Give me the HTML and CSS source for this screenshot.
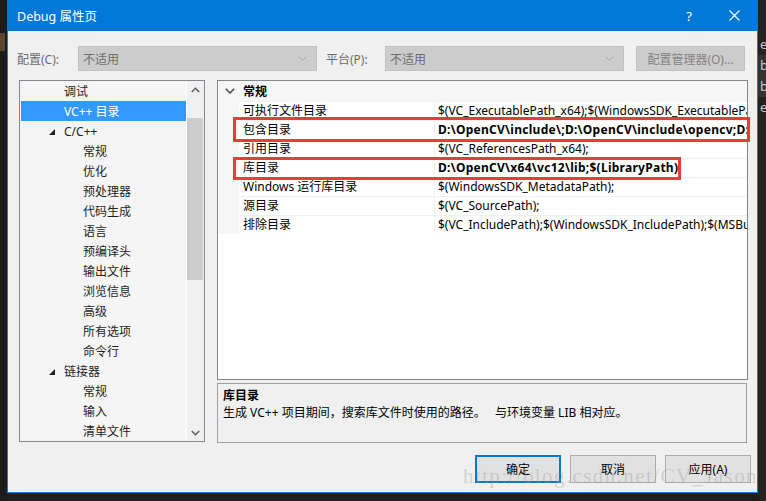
FILE: index.html
```html
<!DOCTYPE html>
<html lang="zh-CN">
<head>
<meta charset="utf-8">
<title>Debug 属性页</title>
<link rel="stylesheet" href="styles.css">
</head>
<body>
<div class="screen">
  <div class="edge edge-left"><span class="smudge"></span></div>
  <div class="dialog">
    <header class="titlebar">
      <span class="title">Debug 属性页</span>
      <span class="help">?</span>
      <svg class="close" width="11" height="11" viewBox="0 0 11 11"><path d="M0.5 0.5L10.5 10.5M10.5 0.5L0.5 10.5" stroke="#fff" stroke-width="1.1" fill="none"/></svg>
    </header>

    <div class="toolbar">
      <span class="lbl lbl-config">配置(C):</span>
      <div class="combo combo-config"><span>不适用</span><svg width="9" height="5" viewBox="0 0 9 5"><path d="M0.5 0.5L4.5 4.5L8.5 0.5" stroke="#a6a6a6" fill="none"/></svg></div>
      <span class="lbl lbl-platform">平台(P):</span>
      <div class="combo combo-platform"><span>不适用</span><svg width="9" height="5" viewBox="0 0 9 5"><path d="M0.5 0.5L4.5 4.5L8.5 0.5" stroke="#a6a6a6" fill="none"/></svg></div>
      <div class="btn-disabled">配置管理器(O)...</div>
    </div>

    <div class="main">
      <div class="tree">
        <ul class="tree-list">
          <li class="ti l1">调试</li>
          <li class="ti l1 sel">VC++ 目录</li>
          <li class="ti exp"><svg class="tri" width="6" height="6" viewBox="0 0 6 6"><polygon points="6,0 6,6 0,6" fill="#1e1e1e"/></svg>C/C++</li>
          <li class="ti l2">常规</li>
          <li class="ti l2">优化</li>
          <li class="ti l2">预处理器</li>
          <li class="ti l2">代码生成</li>
          <li class="ti l2">语言</li>
          <li class="ti l2">预编译头</li>
          <li class="ti l2">输出文件</li>
          <li class="ti l2">浏览信息</li>
          <li class="ti l2">高级</li>
          <li class="ti l2">所有选项</li>
          <li class="ti l2">命令行</li>
          <li class="ti exp"><svg class="tri" width="6" height="6" viewBox="0 0 6 6"><polygon points="6,0 6,6 0,6" fill="#1e1e1e"/></svg>链接器</li>
          <li class="ti l2">常规</li>
          <li class="ti l2">输入</li>
          <li class="ti l2">清单文件</li>
        </ul>
        <div class="vscroll">
          <div class="sb-btn"><svg width="9" height="6" viewBox="0 0 9 6"><path d="M0.8 5L4.5 1.3L8.2 5" stroke="#606060" stroke-width="1.6" fill="none"/></svg></div>
          <div class="track"><div class="thumb"></div></div>
          <div class="sb-btn"><svg width="9" height="6" viewBox="0 0 9 6"><path d="M0.8 1L4.5 4.7L8.2 1" stroke="#606060" stroke-width="1.6" fill="none"/></svg></div>
        </div>
      </div>

      <div class="rightcol">
        <div class="grid">
          <div class="g-head">
            <span class="g-gutter g-chev"><svg width="10" height="6" viewBox="0 0 10 6"><path d="M0.8 0.8L5 5L9.2 0.8" stroke="#404040" stroke-width="1.4" fill="none"/></svg></span>
            <span class="g-cat">常规</span>
          </div>
          <div class="g-row"><span class="g-gutter"></span><span class="g-name">可执行文件目录</span><span class="g-val">$(VC_ExecutablePath_x64);$(WindowsSDK_ExecutablePath);$(VS_ExecutablePath);$(MSBuild_ExecutablePath)</span></div>
          <div class="g-row"><span class="g-gutter"></span><span class="g-name">包含目录</span><span class="g-val bold">D:\OpenCV\include\;D:\OpenCV\include\opencv;D:\OpenCV\include\opencv2;$(IncludePath)</span></div>
          <div class="g-row"><span class="g-gutter"></span><span class="g-name">引用目录</span><span class="g-val">$(VC_ReferencesPath_x64);</span></div>
          <div class="g-row"><span class="g-gutter"></span><span class="g-name">库目录</span><span class="g-val bold">D:\OpenCV\x64\vc12\lib;$(LibraryPath)</span></div>
          <div class="g-row"><span class="g-gutter"></span><span class="g-name">Windows 运行库目录</span><span class="g-val">$(WindowsSDK_MetadataPath);</span></div>
          <div class="g-row"><span class="g-gutter"></span><span class="g-name">源目录</span><span class="g-val">$(VC_SourcePath);</span></div>
          <div class="g-row"><span class="g-gutter"></span><span class="g-name">排除目录</span><span class="g-val">$(VC_IncludePath);$(WindowsSDK_IncludePath);$(MSBuild_ExecutablePath);$(VC_LibraryPath_x64)</span></div>
          <div class="hl hl-include"></div>
          <div class="hl hl-lib"></div>
        </div>
        <div class="desc">
          <div class="desc-title">库目录</div>
          <div class="desc-text">生成 VC++ 项目期间，搜索库文件时使用的路径。&nbsp;&nbsp; 与环境变量 LIB 相对应。</div>
        </div>
      </div>
    </div>

    <div class="buttons">
      <div class="btn btn-default">确定</div>
      <div class="btn">取消</div>
      <div class="btn">应用(A)</div>
    </div>

    <div class="watermark">http://blog.csdn.net/CV_Jason</div>
  </div>
  <div class="edge edge-right">
    <span class="frag">et</span>
    <span class="frag dark">b</span>
    <span class="frag dark">b</span>
    <span class="frag">e</span>
  </div>
</div>
</body>
</html>
```

FILE: styles.css
```css
* { box-sizing: border-box; }

body {
  margin: 0;
  background: #1e1e1e;
  font-family: "Noto Sans", "Noto Sans CJK SC", sans-serif;
  font-size: 12px;
  color: #1e1e1e;
}

.screen {
  display: flex;
  width: 766px;
  height: 501px;
  overflow: hidden;
}

.edge { flex: none; background: #1c1c1c; }
.edge-left { width: 7px; padding-top: 33px; }
.smudge { display: block; width: 5px; height: 18px; background: #5e4330; }

.edge-right {
  width: 8px;
  padding-top: 34px;
  display: flex;
  flex-direction: column;
  overflow: hidden;
  background: #232323;
}
.frag {
  height: 21px;
  line-height: 21px;
  font-size: 13px;
  color: #c8c8c8;
  padding-left: 2px;
  white-space: nowrap;
}
.frag.dark { background: #333333; }

.dialog {
  width: 751px;
  height: 493px;
  flex: none;
  border: 1px solid #1c7bd2;
  border-top: 0;
  background: #f0f0f0;
  display: flex;
  flex-direction: column;
  position: relative;
}

/* title bar */
.titlebar {
  height: 31px;
  margin: 0 -1px;
  background: #0078d7;
  display: flex;
  align-items: center;
  color: #fff;
  padding-left: 10px;
  flex: none;
}
.title { flex: 1; font-size: 12.5px; }
.help { font-size: 13px; margin-right: 37px; }
.close { margin-right: 18px; }

/* toolbar */
.toolbar {
  display: flex;
  align-items: center;
  height: 25px;
  margin-top: 15px;
  padding-left: 9px;
  flex: none;
}
.lbl { color: #6d6d6d; flex: none; }
.lbl-config { width: 61px; }
.lbl-platform { width: 59px; margin-left: 9px; }
.combo {
  width: 239px;
  height: 25px;
  flex: none;
  background: #cccccc;
  border: 1px solid #c2c2c2;
  color: #6d6d6d;
  display: flex;
  align-items: center;
  justify-content: space-between;
  padding: 0 9px 0 4px;
}
.btn-disabled {
  width: 109px;
  height: 25px;
  margin-left: 12px;
  background: #cccccc;
  border: 1px solid #c2c2c2;
  color: #838383;
  display: flex;
  align-items: center;
  justify-content: center;
}

/* main area */
.main {
  display: flex;
  margin-top: 9px;
  padding-left: 11px;
  flex: none;
}

.tree {
  width: 186px;
  height: 362px;
  border: 1px solid #828790;
  background: #f5f5f5;
  display: flex;
  flex: none;
}
.tree-list {
  flex: 1;
  list-style: none;
  margin: 0;
  padding: 0 0 0 1px;
  overflow: hidden;
}
.ti {
  height: 20px;
  display: flex;
  align-items: center;
  white-space: nowrap;
  color: #1e1e1e;
}
.ti.l1 { padding-left: 43px; }
.ti.l2 { padding-left: 62px; }
.ti.exp { padding-left: 28px; }
.ti.sel { background: #3399ff; color: #fff; }
.tri { margin-right: 9px; margin-top: 1px; flex: none; }

.vscroll {
  width: 18px;
  border-left: 1px solid #ffffff;
  background: #f0f0f0;
  display: flex;
  flex-direction: column;
  flex: none;
}
.sb-btn {
  height: 17px;
  display: flex;
  align-items: center;
  justify-content: center;
  flex: none;
}
.track {
  flex: 1;
  padding: 20px 1px 0 0;
}
.thumb { height: 162px; background: #cdcdcd; }

.rightcol {
  width: 531px;
  margin-left: 12px;
  flex: none;
  display: flex;
  flex-direction: column;
}

.grid {
  height: 300px;
  border: 1px solid #828790;
  background: #ffffff;
  position: relative;
}
.g-head {
  display: flex;
  height: 20px;
  align-items: center;
  background: #f6f6f6;
}
.g-gutter { width: 21px; flex: none; align-self: stretch; background: #f6f6f6; }
.g-chev { display: flex; align-items: center; justify-content: center; padding-left: 2px; }
.g-cat { padding-left: 4px; font-weight: bold; color: #000; }

.g-row { display: flex; height: 19px; }
.g-name {
  width: 196px;
  flex: none;
  border-top: 1px solid #f0f0f0;
  border-right: 1px solid #f0f0f0;
  padding-left: 4px;
  line-height: 17px;
  color: #000;
  white-space: nowrap;
  overflow: hidden;
}
.g-val {
  flex: 1;
  min-width: 0;
  border-top: 1px solid #f0f0f0;
  padding-left: 3px;
  line-height: 17px;
  color: #000;
  white-space: nowrap;
  overflow: hidden;
}
.g-val.bold { font-weight: bold; letter-spacing: 0.27px; }

.hl {
  position: absolute;
  border: 3px solid #ec3b3b;
}
.hl-include { left: 15px; top: 36px; width: 517px; height: 25px; }
.hl-lib { left: 15px; top: 76px; width: 448px; height: 23px; }

.desc {
  height: 60px;
  margin-top: 3px;
  width: 530px;
  border: 1px solid #a0a0a0;
  background: #f0f0f0;
  padding: 3px 5px;
  color: #000;
}
.desc-title { font-weight: bold; line-height: 17px; }
.desc-text { line-height: 17px; }

/* buttons */
.buttons {
  display: flex;
  justify-content: flex-end;
  gap: 9px;
  margin-top: 12px;
  padding-right: 6px;
  flex: none;
}
.btn {
  width: 86px;
  height: 28px;
  background: #e1e1e1;
  border: 1px solid #adadad;
  display: flex;
  align-items: center;
  justify-content: center;
  color: #000;
}
.btn-default { border: 2px solid #0078d7; }

.watermark {
  position: absolute;
  left: 455px;
  top: 464px;
  font-family: "Liberation Serif", serif;
  font-size: 21px;
  color: rgba(150, 150, 150, 0.35);
  white-space: nowrap;
  letter-spacing: 1.4px;
}
```
